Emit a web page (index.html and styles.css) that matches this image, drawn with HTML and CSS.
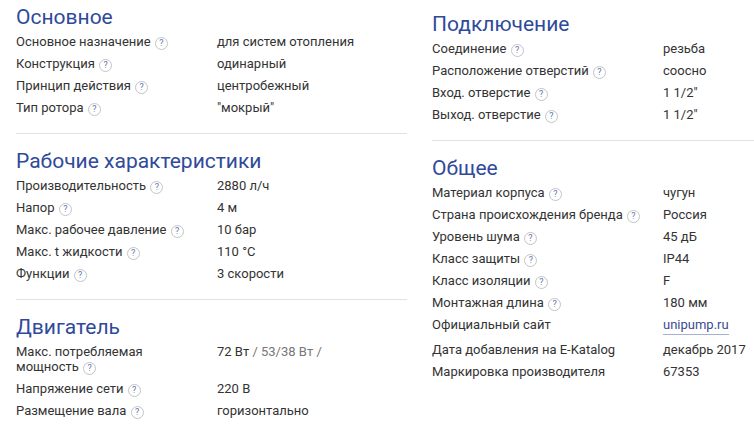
FILE: index.html
```html
<!DOCTYPE html>
<html lang="ru">
<head>
<meta charset="utf-8">
<link rel="stylesheet" href="styles.css">
</head>
<body>
<div class="specs">
  <div class="col col-left">
    <section class="group">
      <h2 class="group-title">Основное</h2>
      <div class="row"><div class="label">Основное назначение <span class="help">?</span></div><div class="value">для систем отопления</div></div>
      <div class="row"><div class="label">Конструкция <span class="help">?</span></div><div class="value">одинарный</div></div>
      <div class="row"><div class="label">Принцип действия <span class="help">?</span></div><div class="value">центробежный</div></div>
      <div class="row"><div class="label">Тип ротора <span class="help">?</span></div><div class="value">"мокрый"</div></div>
    </section>
    <section class="group">
      <h2 class="group-title">Рабочие характеристики</h2>
      <div class="row"><div class="label">Производительность <span class="help">?</span></div><div class="value">2880 л/ч</div></div>
      <div class="row"><div class="label">Напор <span class="help">?</span></div><div class="value">4 м</div></div>
      <div class="row"><div class="label">Макс. рабочее давление <span class="help">?</span></div><div class="value">10 бар</div></div>
      <div class="row"><div class="label">Макс. t жидкости <span class="help">?</span></div><div class="value">110 °C</div></div>
      <div class="row"><div class="label">Функции <span class="help">?</span></div><div class="value">3 скорости</div></div>
    </section>
    <section class="group group-last">
      <h2 class="group-title">Двигатель</h2>
      <div class="row"><div class="label">Макс. потребляемая мощность <span class="help">?</span></div><div class="value">72 Вт <span class="muted">/ 53/38 Вт /</span></div></div>
      <div class="row"><div class="label">Напряжение сети <span class="help">?</span></div><div class="value">220 В</div></div>
      <div class="row"><div class="label">Размещение вала <span class="help">?</span></div><div class="value">горизонтально</div></div>
    </section>
  </div>
  <div class="col col-right">
    <section class="group">
      <h2 class="group-title">Подключение</h2>
      <div class="row"><div class="label">Соединение <span class="help">?</span></div><div class="value">резьба</div></div>
      <div class="row"><div class="label">Расположение отверстий <span class="help">?</span></div><div class="value">соосно</div></div>
      <div class="row"><div class="label">Вход. отверстие <span class="help">?</span></div><div class="value">1 1/2"</div></div>
      <div class="row"><div class="label">Выход. отверстие <span class="help">?</span></div><div class="value">1 1/2"</div></div>
    </section>
    <section class="group group-last">
      <h2 class="group-title">Общее</h2>
      <div class="row"><div class="label">Материал корпуса <span class="help">?</span></div><div class="value">чугун</div></div>
      <div class="row"><div class="label">Страна происхождения бренда <span class="help">?</span></div><div class="value">Россия</div></div>
      <div class="row"><div class="label">Уровень шума <span class="help">?</span></div><div class="value">45 дБ</div></div>
      <div class="row"><div class="label">Класс защиты <span class="help">?</span></div><div class="value">IP44</div></div>
      <div class="row"><div class="label">Класс изоляции <span class="help">?</span></div><div class="value">F</div></div>
      <div class="row"><div class="label">Монтажная длина <span class="help">?</span></div><div class="value">180 мм</div></div>
      <div class="row"><div class="label">Официальный сайт</div><div class="value"><a class="site-link" href="#">unipump.ru</a></div></div>
      <div class="row"><div class="label">Дата добавления на E-Katalog</div><div class="value">декабрь 2017</div></div>
      <div class="row"><div class="label">Маркировка производителя</div><div class="value">67353</div></div>
    </section>
  </div>
</div>
</body>
</html>
```

FILE: styles.css
```css
html, body {
  margin: 0;
  padding: 0;
  background: #ffffff;
}

body {
  font-family: Roboto, "Liberation Sans", Arial, sans-serif;
  color: #333333;
  font-size: 13px;
}

.specs {
  display: grid;
  grid-template-columns: 391px 1fr;
  column-gap: 25px;
  padding-left: 16px;
  align-items: start;
}

.col-right {
  padding-top: 7px;
}

.group {
  padding: 15px 0 15px;
  border-bottom: 1px solid #e2e2e2;
}

.group:first-child {
  padding-top: 5px;
}

.group-last {
  border-bottom: none;
}

.group-title {
  margin: 0 0 1px;
  font-size: 21px;
  line-height: 24px;
  font-weight: 400;
  color: #2f4a9a;
}

.row {
  display: grid;
  grid-template-columns: 201px 1fr;
  padding: 4px 0 3px;
  line-height: 15px;
}

.col-right .row {
  grid-template-columns: 231px 1fr;
}

.label {
  padding-right: 12px;
}

.help {
  display: inline-block;
  box-sizing: border-box;
  width: 13px;
  height: 13px;
  margin: -2px 0 -2px 1px;
  border: 1px solid #c4c4c4;
  border-radius: 50%;
  font-size: 9px;
  line-height: 11px;
  text-align: center;
  color: #6577b3;
  vertical-align: 0;
}

.muted {
  color: #777777;
}

.site-link {
  display: inline-block;
  color: #3c4a92;
  text-decoration: none;
  border-bottom: 1px solid #a9b0d6;
  padding-bottom: 2px;
}
```
